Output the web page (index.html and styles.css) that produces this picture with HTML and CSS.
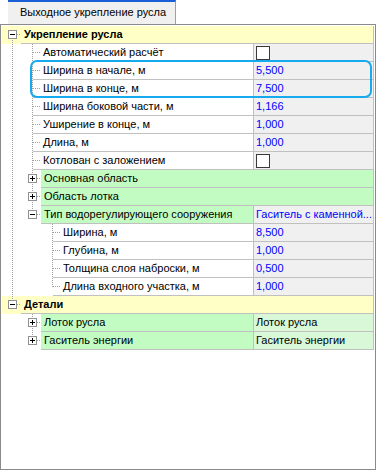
FILE: index.html
```html
<!DOCTYPE html>
<html lang="ru">
<head>
  <meta charset="UTF-8">
  <title>Выходное укрепление русла</title>
  <link rel="stylesheet" href="styles.css">
</head>
<body>
  <svg class="defs" width="0" height="0">
    <defs>
      <!-- ancestor guide: line passes through -->
      <symbol id="g-pass" viewBox="0 0 20 18">
        <path d="M10.5 0V18" class="dot"/>
      </symbol>
      <!-- leaf, more siblings below -->
      <symbol id="c-tee" viewBox="0 0 19 18">
        <path d="M10.5 0V18M11 8.5H19" class="dot"/>
        <path d="M11 17.5H19" class="sep"/>
      </symbol>
      <!-- leaf, last sibling -->
      <symbol id="c-end" viewBox="0 0 19 18">
        <path d="M10.5 0V9M11 8.5H19" class="dot"/>
        <path d="M11 17.5H19" class="sep"/>
      </symbol>
      <!-- expandable, more siblings below -->
      <symbol id="c-plus" viewBox="0 0 19 18">
        <path d="M10.5 0V4M10.5 14V18M15 8.5H19" class="dot"/>
        <rect x="6.5" y="4.5" width="8" height="8" class="box"/>
        <path d="M8 8.5h5M10.5 6v5" class="sign"/>
      </symbol>
      <!-- expandable, last sibling -->
      <symbol id="c-plus-end" viewBox="0 0 19 18">
        <path d="M10.5 0V4M15 8.5H19" class="dot"/>
        <rect x="6.5" y="4.5" width="8" height="8" class="box"/>
        <path d="M8 8.5h5M10.5 6v5" class="sign"/>
      </symbol>
      <symbol id="c-minus-end" viewBox="0 0 19 18">
        <path d="M10.5 0V4M15 8.5H19" class="dot"/>
        <rect x="6.5" y="4.5" width="8" height="8" class="box"/>
        <path d="M8 8.5h5" class="sign"/>
      </symbol>
      <!-- first root node -->
      <symbol id="c-minus-first" viewBox="0 0 19 18">
        <path d="M10.5 14V18M15 8.5H19" class="dot"/>
        <rect x="6.5" y="4.5" width="8" height="8" class="box"/>
        <path d="M8 8.5h5" class="sign"/>
      </symbol>
    </defs>
  </svg>

  <div class="tabs">
    <div class="tab">Выходное укрепление русла</div>
  </div>

  <div class="panel">
    <div class="grid">
      <div class="row category">
        <svg class="conn" width="19" height="18"><use href="#c-minus-first"/></svg>
        <div class="cell"><div class="name">Укрепление русла</div></div>
      </div>

      <div class="row">
        <svg class="guide" width="20" height="18"><use href="#g-pass"/></svg>
        <svg class="conn" width="19" height="18"><use href="#c-tee"/></svg>
        <div class="cell"><div class="name">Автоматический расчёт</div><div class="value"><span class="check"></span></div></div>
      </div>
      <div class="row">
        <svg class="guide" width="20" height="18"><use href="#g-pass"/></svg>
        <svg class="conn" width="19" height="18"><use href="#c-tee"/></svg>
        <div class="cell"><div class="name">Ширина в начале, м</div><div class="value">5,500</div></div>
      </div>
      <div class="row">
        <svg class="guide" width="20" height="18"><use href="#g-pass"/></svg>
        <svg class="conn" width="19" height="18"><use href="#c-tee"/></svg>
        <div class="cell"><div class="name">Ширина в конце, м</div><div class="value">7,500</div></div>
      </div>
      <div class="row">
        <svg class="guide" width="20" height="18"><use href="#g-pass"/></svg>
        <svg class="conn" width="19" height="18"><use href="#c-tee"/></svg>
        <div class="cell"><div class="name">Ширина боковой части, м</div><div class="value">1,166</div></div>
      </div>
      <div class="row">
        <svg class="guide" width="20" height="18"><use href="#g-pass"/></svg>
        <svg class="conn" width="19" height="18"><use href="#c-tee"/></svg>
        <div class="cell"><div class="name">Уширение в конце, м</div><div class="value">1,000</div></div>
      </div>
      <div class="row">
        <svg class="guide" width="20" height="18"><use href="#g-pass"/></svg>
        <svg class="conn" width="19" height="18"><use href="#c-tee"/></svg>
        <div class="cell"><div class="name">Длина, м</div><div class="value">1,000</div></div>
      </div>
      <div class="row">
        <svg class="guide" width="20" height="18"><use href="#g-pass"/></svg>
        <svg class="conn" width="19" height="18"><use href="#c-tee"/></svg>
        <div class="cell"><div class="name">Котлован с заложением</div><div class="value"><span class="check"></span></div></div>
      </div>
      <div class="row">
        <svg class="guide" width="20" height="18"><use href="#g-pass"/></svg>
        <svg class="conn" width="19" height="18"><use href="#c-plus"/></svg>
        <div class="cell group"><div class="name">Основная область</div></div>
      </div>
      <div class="row">
        <svg class="guide" width="20" height="18"><use href="#g-pass"/></svg>
        <svg class="conn" width="19" height="18"><use href="#c-plus"/></svg>
        <div class="cell group"><div class="name">Область лотка</div></div>
      </div>
      <div class="row">
        <svg class="guide" width="20" height="18"><use href="#g-pass"/></svg>
        <svg class="conn" width="19" height="18"><use href="#c-minus-end"/></svg>
        <div class="cell group"><div class="name">Тип водорегулирующего сооружения</div><div class="value plain">Гаситель с каменной...</div></div>
      </div>

      <div class="row">
        <svg class="guide" width="20" height="18"><use href="#g-pass"/></svg>
        <span class="gap"></span>
        <svg class="conn" width="19" height="18"><use href="#c-tee"/></svg>
        <div class="cell"><div class="name">Ширина, м</div><div class="value">8,500</div></div>
      </div>
      <div class="row">
        <svg class="guide" width="20" height="18"><use href="#g-pass"/></svg>
        <span class="gap"></span>
        <svg class="conn" width="19" height="18"><use href="#c-tee"/></svg>
        <div class="cell"><div class="name">Глубина, м</div><div class="value">1,000</div></div>
      </div>
      <div class="row">
        <svg class="guide" width="20" height="18"><use href="#g-pass"/></svg>
        <span class="gap"></span>
        <svg class="conn" width="19" height="18"><use href="#c-tee"/></svg>
        <div class="cell"><div class="name">Толщина слоя наброски, м</div><div class="value">0,500</div></div>
      </div>
      <div class="row">
        <svg class="guide" width="20" height="18"><use href="#g-pass"/></svg>
        <span class="gap"></span>
        <svg class="conn" width="19" height="18"><use href="#c-end"/></svg>
        <div class="cell"><div class="name">Длина входного участка, м</div><div class="value">1,000</div></div>
      </div>

      <div class="row category">
        <svg class="conn" width="19" height="18"><use href="#c-minus-end"/></svg>
        <div class="cell"><div class="name">Детали</div></div>
      </div>
      <div class="row">
        <span class="gap"></span>
        <svg class="conn" width="19" height="18"><use href="#c-plus"/></svg>
        <div class="cell group"><div class="name">Лоток русла</div><div class="value">Лоток русла</div></div>
      </div>
      <div class="row">
        <span class="gap"></span>
        <svg class="conn" width="19" height="18"><use href="#c-plus-end"/></svg>
        <div class="cell group"><div class="name">Гаситель энергии</div><div class="value">Гаситель энергии</div></div>
      </div>
    </div>

    <!-- selection frame drawn over the two width rows -->
    <div class="focus"></div>
  </div>
</body>
</html>
```

FILE: styles.css
```css
body {
  margin: 0;
  font-family: "Liberation Sans", Arial, sans-serif;
  font-size: 11px;
  color: #000;
  background-color: #fff;
}

.defs {
  position: absolute;
}

/* tab strip */
.tabs {
  display: flex;
  height: 24px;
  padding-left: 8px;
}

.tab {
  box-sizing: border-box;
  width: 168px;
  padding-left: 12px;
  border-top: 2px solid #1b5fd8;
  border-right: 1px solid #a0a0a0;
  background-color: #f0f0f0;
  font-size: 11px;
  line-height: 21px;
  white-space: nowrap;
}

/* property grid */
.panel {
  position: relative;
  box-sizing: border-box;
  height: 446px;
  padding: 1px;
  border: 1px solid #8a8a8a;
}

.row {
  display: flex;
  height: 18px;
  border-right: 1px solid #c0c0c0;
}

.row svg {
  display: block;
  flex: none;
}

.row .gap {
  flex: none;
  width: 20px;
}

.dot {
  fill: none;
  stroke: #a0a0a0;
  stroke-dasharray: 1 1;
}

.sep {
  fill: none;
  stroke: #c0c0c0;
}

.box {
  fill: #fff;
  stroke: #919191;
}

.sign {
  fill: none;
  stroke: #000;
}

.cell {
  flex: 1;
  display: flex;
  min-width: 0;
  border-bottom: 1px solid #c0c0c0;
}

.cell .name {
  flex: 1;
  min-width: 0;
  padding-left: 2px;
  line-height: 17px;
  white-space: nowrap;
  overflow: hidden;
}

.cell .value {
  flex: none;
  box-sizing: border-box;
  width: 120px;
  padding-left: 2px;
  border-left: 1px solid #c0c0c0;
  background-color: #f0f0f0;
  color: #0000ff;
  line-height: 17px;
  white-space: nowrap;
  overflow: hidden;
}

.category {
  background-color: #ffffc6;
}

.category .name {
  padding-left: 3px;
  font-weight: bold;
}

.group {
  background-color: #c2fcc2;
}

.group .name {
  padding-left: 3px;
}

.group .value {
  background-color: #d8f8d8;
  color: #000;
}

.group .value.plain {
  background-color: #f0f0f0;
  color: #0000ff;
}

.check {
  display: block;
  box-sizing: border-box;
  width: 14px;
  height: 14px;
  margin-top: 2px;
  border: 1px solid #3a3a3a;
  background-color: #fff;
}

.focus {
  position: absolute;
  left: 29px;
  top: 35px;
  width: 342px;
  height: 38px;
  box-sizing: border-box;
  border: 2px solid #16aaee;
  border-radius: 7px;
}
```
